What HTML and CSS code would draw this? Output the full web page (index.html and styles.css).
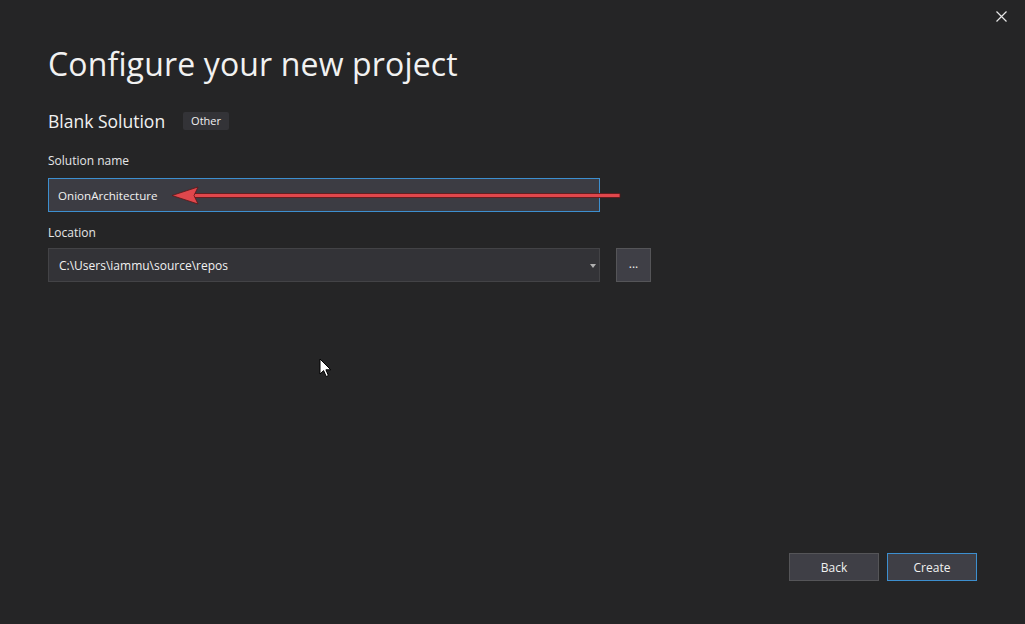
FILE: index.html
```html
<!DOCTYPE html>
<html lang="en">
<head>
    <meta charset="UTF-8">
    <meta name="viewport" content="width=device-width, initial-scale=1.0">
    <title>Configure your new project</title>
    <link rel="stylesheet" href="styles.css">
</head>
<body>
    <div class="window">
        <button class="close-btn" aria-label="Close">
            <svg width="11" height="11" viewBox="0 0 11 11"><path d="M0.5 0.5L10.5 10.5M10.5 0.5L0.5 10.5" stroke="#e6e6e6" stroke-width="1.2"/></svg>
        </button>

        <h1 class="title">Configure your new project</h1>

        <div class="template-row">
            <span class="template-name">Blank Solution</span>
            <span class="tag">Other</span>
        </div>

        <div class="form-group">
            <label class="field-label" for="solutionName">Solution name</label>
            <div class="field-row">
                <input class="text-input focused" id="solutionName" type="text" value="OnionArchitecture">
            </div>
        </div>

        <div class="form-group">
            <label class="field-label" for="location">Location</label>
            <div class="field-row">
                <div class="combo" id="location">
                    <span>C:\Users\iammu\source\repos</span>
                    <span class="combo-arrow"></span>
                </div>
                <button class="browse-btn">...</button>
            </div>
        </div>

        <div class="footer">
            <button class="btn">Back</button>
            <button class="btn primary">Create</button>
        </div>

        <!-- annotation arrow drawn over the screenshot -->
        <svg class="annotation" width="460" height="24" viewBox="0 0 460 24">
            <path d="M22 10.5H450V14.5H22Z" fill="#e0474c" stroke="#5a1518" stroke-width="0.8"/>
            <path d="M2 12.5L28 4L24 12.5L28 21Z" fill="#e0474c" stroke="#5a1518" stroke-width="0.8" stroke-linejoin="round"/>
        </svg>

        <svg class="cursor" width="14" height="20" viewBox="0 0 14 20">
            <path d="M1 1V16L4.6 12.6L7.2 18.5L9.4 17.5L6.9 11.8H11.8Z" fill="#fff" stroke="#000" stroke-width="1"/>
        </svg>
    </div>
</body>
</html>
```

FILE: styles.css
```css
* {
    box-sizing: border-box;
}

body {
    margin: 0;
    padding: 0;
    background-color: #252526;
    font-family: "Open Sans", "Noto Sans", sans-serif;
    color: #f1f1f1;
}

.window {
    position: relative;
    width: 1025px;
    height: 624px;
    padding: 0 48px;
    display: flex;
    flex-direction: column;
    overflow: hidden;
}

.close-btn {
    position: absolute;
    top: 10px;
    right: 17px;
    width: 13px;
    height: 13px;
    padding: 1px;
    border: none;
    background: transparent;
    display: flex;
}

.title {
    margin: 42px 0 0;
    font-size: 32px;
    font-weight: 400;
    line-height: 44px;
    color: #f1f1f1;
    letter-spacing: 0.15px;
}

.template-row {
    display: flex;
    align-items: center;
    margin-top: 23px;
    height: 24px;
}

.template-name {
    font-size: 17.5px;
    font-weight: 400;
    color: #f1f1f1;
}

.tag {
    margin-left: 18px;
    background-color: #333337;
    border-radius: 2px;
    padding: 1px 8px 2px;
    font-size: 11px;
    color: #f1f1f1;
}

.form-group {
    display: flex;
    flex-direction: column;
}

.field-label {
    font-size: 12px;
    color: #e6e6e6;
    margin-top: 19px;
    margin-bottom: 9px;
    line-height: 17px;
}

.form-group + .form-group .field-label {
    margin-top: 12px;
    margin-bottom: 7px;
}

.field-row {
    display: flex;
    gap: 16px;
}

.text-input {
    width: 552px;
    height: 34px;
    padding: 0 9px;
    background-color: #3f3f46;
    border: 1px solid #434346;
    color: #f1f1f1;
    font-family: inherit;
    font-size: 11.6px;
    outline: none;
}

.text-input.focused {
    border-color: #3d8fcf;
    background-color: #3c3c43;
}

.combo {
    position: relative;
    width: 552px;
    height: 34px;
    padding: 0 10px;
    background-color: #333337;
    border: 1px solid #434346;
    display: flex;
    align-items: center;
    font-size: 12px;
    color: #f1f1f1;
}

.combo-arrow {
    position: absolute;
    right: 3px;
    top: 15px;
    border-left: 3.5px solid transparent;
    border-right: 3.5px solid transparent;
    border-top: 4px solid #b0b0b0;
}

.browse-btn {
    width: 35px;
    height: 34px;
    background-color: #3f3f46;
    border: 1px solid #555558;
    color: #f1f1f1;
    font-family: inherit;
    font-size: 12px;
    padding: 0 0 4px;
}

.footer {
    margin-top: auto;
    margin-bottom: 43px;
    display: flex;
    justify-content: flex-end;
    gap: 8px;
}

.btn {
    width: 90px;
    height: 28px;
    background-color: #3f3f46;
    border: 1px solid #555558;
    color: #f1f1f1;
    font-family: inherit;
    font-size: 12px;
}

.btn.primary {
    border-color: #3d8fcf;
}

.annotation {
    position: absolute;
    left: 170px;
    top: 183px;
}

.cursor {
    position: absolute;
    left: 319px;
    top: 358px;
}
```
